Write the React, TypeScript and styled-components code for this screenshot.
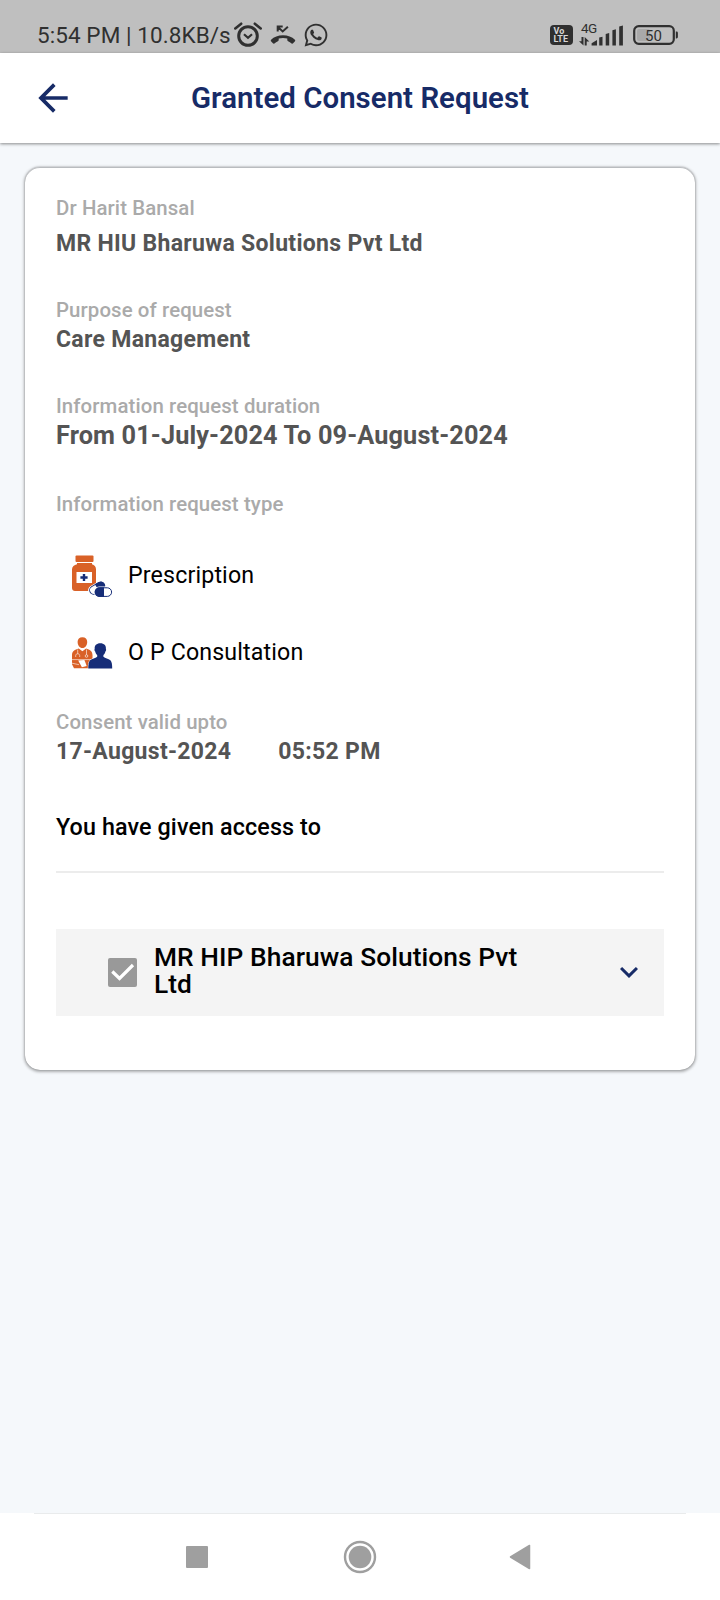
import React from "react";
import styled, { createGlobalStyle } from "styled-components";
import { FaWhatsapp } from "react-icons/fa";
import { MdArrowBack, MdKeyboardArrowDown } from "react-icons/md";

const NAVY = "#172b67";
const INK = "#303030";
const ORANGE = "#d96127";
const PILL = "#162d78";
const PAGE = "#f5f8fb";

const GlobalStyle = createGlobalStyle`
  * { box-sizing: border-box; }
  body { margin: 0; background: ${PAGE}; font-family: Roboto, "Liberation Sans", sans-serif; }
  svg { display: block; flex: none; }
`;

const Screen = styled.div`
  width: 720px;
  height: 1600px;
  display: flex;
  flex-direction: column;
  background: ${PAGE};
  overflow: hidden;
`;

const StatusBar = styled.div`
  height: 53px;
  flex: none;
  display: flex;
  justify-content: space-between;
  padding: 22px 41px 0 37px;
  background: #bfbfbf;
  color: ${INK};
`;

const StatusGroup = styled.div`
  display: flex;
  align-items: center;
  height: 26px;
`;

const StatusText = styled.span`
  font-size: 22.5px;
  line-height: 26px;
  letter-spacing: 0.08px;
  white-space: nowrap;
  width: 198px;
`;

const StatusIcon = styled.div<{ $before: number }>`
  margin-left: ${(p) => p.$before}px;
`;

const VolteBadge = styled.div`
  width: 23px;
  height: 20px;
  margin-right: 6px;
  padding: 2px 0 0 3.5px;
  border-radius: 4px;
  background: #2f2f2f;
  color: #d6d6d6;
  font-size: 9px;
  font-weight: 700;
  line-height: 8px;
`;

const Network = styled.div`
  position: relative;
  width: 46px;
  height: 24px;
`;

const NetworkName = styled.span`
  position: absolute;
  left: 2px;
  top: -3px;
  font-size: 13.5px;
  line-height: 16px;
  letter-spacing: -0.5px;
`;

const Header = styled.header`
  height: 90px;
  flex: none;
  display: grid;
  grid-template-columns: 107px 1fr 107px;
  align-items: center;
  background: #fff;
  color: ${NAVY};
  box-shadow: 0 1px 3px rgba(0, 0, 0, 0.45);
`;

const BackButton = styled.button`
  width: 44px;
  height: 44px;
  margin-left: 31px;
  padding: 0;
  border: 0;
  background: none;
  color: inherit;
`;

const Title = styled.h1`
  margin: 0;
  font-size: 29.4px;
  line-height: 34px;
  font-weight: 650;
  letter-spacing: 0.05px;
  text-align: center;
`;

const Body = styled.main`
  flex: 1;
  padding: 24px 25px 0;
`;

const Card = styled.section`
  height: 903px;
  padding: 29px 31px 0;
  display: flex;
  flex-direction: column;
  background: #fff;
  border-radius: 15px;
  box-shadow: inset 0 1px 0 #b9bcbf, 0 0 1px rgba(0, 0, 0, 0.4), 0 1px 3px 1px rgba(0, 0, 0, 0.3);
`;

const Field = styled.div<{ $after: number; $gap?: number }>`
  display: flex;
  flex-direction: column;
  gap: ${(p) => p.$gap ?? 4}px;
  margin-bottom: ${(p) => p.$after}px;
`;

const Label = styled.div`
  font-size: 20.4px;
  line-height: 24px;
  font-weight: 500;
  letter-spacing: 0.1px;
  color: #aaa;
`;

const Value = styled.div<{ $large?: boolean }>`
  display: flex;
  gap: 47px;
  font-size: ${(p) => (p.$large ? 25.3 : 23)}px;
  line-height: ${(p) => (p.$large ? 30 : 28)}px;
  letter-spacing: ${(p) => (p.$large ? 0.12 : 0.3)}px;
  font-weight: 700;
  color: #545454;
`;

const TypeList = styled.div`
  display: flex;
  flex-direction: column;
  gap: 35px;
  margin-bottom: 36px;
`;

const TypeRow = styled.div`
  display: flex;
  align-items: center;
  gap: 15px;
  height: 42px;
  padding-left: 16px;
`;

const TypeName = styled.span`
  padding-bottom: 2px;
  font-size: 23.2px;
  line-height: 28px;
  letter-spacing: 0.15px;
  color: #000;
`;

const AccessHeading = styled.h2`
  margin: 0;
  padding-bottom: 30px;
  border-bottom: 2px solid #ececec;
  font-size: 23.3px;
  line-height: 28px;
  font-weight: 500;
  letter-spacing: 0.12px;
  color: #000;
`;

const Provider = styled.div`
  display: flex;
  align-items: center;
  height: 87px;
  margin-top: 56px;
  padding: 0 17px 0 52px;
  background: #f4f4f4;
`;

const Checkbox = styled.span`
  width: 29px;
  height: 29px;
  border-radius: 2px;
  background: #999;
`;

const ProviderName = styled.span`
  width: 400px;
  margin: 0 auto 3px 17px;
  font-size: 26.3px;
  line-height: 27px;
  font-weight: 500;
  letter-spacing: 0.08px;
  color: #000;
`;

const Chevron = styled(MdKeyboardArrowDown)`
  margin-bottom: 2px;
  color: ${NAVY};
`;

const NavBar = styled.nav`
  height: 87px;
  flex: none;
  display: flex;
  flex-direction: column;
  align-items: center;
  background: #fff;
`;

const NavEdge = styled.div`
  width: 652px;
  height: 1px;
  background: #e9ebec;
`;

const NavKeys = styled.div`
  width: 348px;
  height: 34px;
  margin-top: 26px;
  display: grid;
  grid-template-columns: 157px 1fr 25px;
  align-items: center;
`;

const RecentKey = styled.span`
  width: 22px;
  height: 22px;
  border-radius: 1px;
  background: #9f9f9f;
`;

const AlarmIcon = () => (
  <svg width="28" height="26" viewBox="0 0 28 26" fill="none" stroke={INK}>
    <circle cx="14" cy="14" r="9.3" strokeWidth="3" />
    <path d="M10 12.2l4 3.6 4-3.6" strokeWidth="2.2" />
    <path d="M1.3 6.4L7.2 1.7M26.7 6.4L20.8 1.7" strokeWidth="2.6" strokeLinecap="round" />
  </svg>
);

const MissedCallIcon = () => (
  <svg width="26" height="20" viewBox="0 0 26 20" fill="none">
    <path d="M7.7 6.500V1.600h5M8.200 2.200l4.500 4.200 5.200-4.600" stroke={INK} strokeWidth="2" />
    <path
      d="M1.1 14.7C4 11.8 8.200 10.200 13 10.200s9 1.600 11.900 4.500c.5.5.5 1 .1 1.500l-1.900 2.100c-.5.5-1 .5-1.500.1-1.200-.9-2.300-1.600-3.500-2.100-.5-.2-.8-.6-.8-1.200v-1.500c-2.800-.8-5.800-.8-8.600 0v1.500c0 .6-.3 1-.8 1.200-1.200.5-2.400 1.200-3.500 2.100-.5.4-1 .4-1.500-.1L1 16.200c-.4-.5-.4-1 .1-1.500z"
      fill={INK}
    />
  </svg>
);

const SignalIcon = () => (
  <svg width="46" height="24" viewBox="0 0 46 24" fill={INK}>
    <path d="M0 18.200h2.500V14h2v8.500L0 18.200zM5.700 14l4.600 4.500H7.700v4h-2z" />
    <path d="M18 17v5.500h-5.400v-2.300zM20.200 14.600l3.300-.9v8.800h-3.300zM26.700 11l3.500-1v12.500h-3.500zM33.400 7.200l3.500-1v16.300h-3.500zM40.200 3.500l3.700-1v20h-3.700z" />
  </svg>
);

const BatteryIcon = () => (
  <svg width="46" height="20" viewBox="0 0 46 20">
    <rect x="4" y="4" width="13" height="12" rx="2" fill="#a9a9a9" />
    <rect x="1.200" y="1.200" width="39.600" height="17.600" rx="4.500" fill="none" stroke={INK} strokeWidth="2.200" />
    <path d="M42.800 6.500h.7q1.400 0 1.400 1.400v4.200q0 1.400-1.400 1.400h-.7z" fill={INK} />
    <text x="20.500" y="15.500" textAnchor="middle" fontFamily="Roboto, sans-serif" fontSize="15" fill={INK}>50</text>
  </svg>
);

const PrescriptionIcon = () => (
  <svg width="41" height="42" viewBox="0 0 41 42">
    <rect x="3.500" y="0.500" width="18" height="6.500" rx="1" fill={ORANGE} />
    <path d="M5 8h15v1.200c2.300.7 4 2.600 4 5V33c0 1.700-1.300 3-3 3H3c-1.700 0-3-1.300-3-3V14.200c0-2.400 2.200-4.300 5-5z" fill={ORANGE} />
    <rect x="4.500" y="17" width="15.500" height="11" fill="#fff" />
    <path d="M10.800 19h2.400v2.300h2.400v2.400h-2.400V26h-2.400v-2.300H8.400v-2.400h2.400z" fill={PILL} />
    <g transform="rotate(-30 25 33)">
      <rect x="15.500" y="28" width="19" height="10" rx="5" fill="#fff" />
      <rect x="17" y="29.200" width="16" height="8" rx="4" fill="#fff" stroke={PILL} strokeWidth="0.9" />
      <path d="M25 28.800h4.500a4.300 4.300 0 010 8.600H25z" fill={PILL} />
    </g>
    <rect x="21.800" y="31.500" width="19" height="10.500" rx="5.200" fill="#fff" />
    <rect x="23.300" y="32.800" width="16.300" height="8.600" rx="4.300" fill="#fff" stroke={PILL} />
    <path d="M32 32.300h-4.600a4.800 4.800 0 000 9.600H32z" fill={PILL} />
  </svg>
);

const ConsultationIcon = () => (
  <svg width="41" height="42" viewBox="0 0 41 42">
    <path d="M10.400 5.200c3 0 4.800 1.900 4.800 4.700 0 3-1.900 6.100-4.800 6.100s-4.800-3.100-4.800-6.100c0-2.800 1.800-4.700 4.800-4.700z" fill={ORANGE} />
    <path d="M6.700 16.500l3.700 2.700 3.700-2.700c3.700 1.100 6.400 2.800 6.400 6.500v9.200l-2.300 4H2L0 32.200V23c0-3.700 2.900-5.400 6.700-6.500z" fill={ORANGE} />
    <g fill="none" stroke="#fff" strokeWidth="0.6">
      <path d="M5.700 17.500v4.300M3.700 25v-1.500c0-2.300 4-2.300 4 0V25M14.500 17.500v5.200M0 27.600h20" />
      <circle cx="14.500" cy="24" r="1.300" />
      <path d="M0 31.200l7 1.500" />
    </g>
    <path d="M6.200 28.500l6.200-.5 2.300 6-4.800 1.300z" fill="#fff" />
    <path
      d="M28.300 11.300c3.800 0 5.900 2.300 5.600 5.500.5.900.2 2.300-.5 2.700-.4 1.700-1.200 2.800-2 3.600v1.600c1.800 1.800 4.900 1.600 7 3.600 1.500 1.500 1.800 4.700 1.800 8.200H16.300c0-3.500.3-6.700 1.800-8.200 2.100-2 5.300-1.800 7.100-3.600v-1.600c-.8-.8-1.600-1.900-2-3.600-.7-.4-1-1.800-.5-2.700-.3-3.200 1.800-5.500 5.600-5.500z"
      fill={PILL}
      stroke="#fff"
      strokeWidth="1"
      paintOrder="stroke"
    />
  </svg>
);

const CheckMark = () => (
  <svg width="29" height="29" viewBox="0 0 29 29" fill="none" stroke="#fff" strokeWidth="3.200">
    <path d="M4.300 13.500l7.200 7L25 7" />
  </svg>
);

const HomeKey = () => (
  <svg width="34" height="34" viewBox="0 0 34 34">
    <circle cx="17" cy="17" r="15" fill="none" stroke="#9f9f9f" strokeWidth="2.400" />
    <circle cx="17" cy="17" r="11.300" fill="#9f9f9f" />
  </svg>
);

const BackKey = () => (
  <svg width="22" height="26" viewBox="0 0 22 26">
    <path d="M20.500 1.500v23L1.500 13z" fill="#9f9f9f" stroke="#9f9f9f" strokeWidth="1.500" strokeLinejoin="round" />
  </svg>
);

const requestTypes = [
  { name: "Prescription", Icon: PrescriptionIcon },
  { name: "O P Consultation", Icon: ConsultationIcon },
];

export default function App() {
  return (
    <Screen>
      <GlobalStyle />
      <StatusBar>
        <StatusGroup>
          <StatusText>5:54 PM | 10.8KB/s</StatusText>
          <StatusIcon $before={-1}><AlarmIcon /></StatusIcon>
          <StatusIcon $before={8}><MissedCallIcon /></StatusIcon>
          <StatusIcon $before={7}><FaWhatsapp size={26} /></StatusIcon>
        </StatusGroup>
        <StatusGroup>
          <VolteBadge>Vo<br />LTE</VolteBadge>
          <Network>
            <SignalIcon />
            <NetworkName>4G</NetworkName>
          </Network>
          <StatusIcon $before={8}><BatteryIcon /></StatusIcon>
        </StatusGroup>
      </StatusBar>
      <Header>
        <BackButton aria-label="Back"><MdArrowBack size={44} /></BackButton>
        <Title>Granted Consent Request</Title>
      </Header>
      <Body>
        <Card>
          <Field $after={40} $gap={10}>
            <Label>Dr Harit Bansal</Label>
            <Value>MR HIU Bharuwa Solutions Pvt Ltd</Value>
          </Field>
          <Field $after={40}>
            <Label>Purpose of request</Label>
            <Value>Care Management</Value>
          </Field>
          <Field $after={41} $gap={3}>
            <Label>Information request duration</Label>
            <Value $large>From 01-July-2024 To 09-August-2024</Value>
          </Field>
          <Field $after={39}>
            <Label>Information request type</Label>
          </Field>
          <TypeList>
            {requestTypes.map(({ name, Icon }) => (
              <TypeRow key={name}>
                <Icon />
                <TypeName>{name}</TypeName>
              </TypeRow>
            ))}
          </TypeList>
          <Field $after={47}>
            <Label>Consent valid upto</Label>
            <Value>
              <span>17-August-2024</span>
              <span>05:52 PM</span>
            </Value>
          </Field>
          <AccessHeading>You have given access to</AccessHeading>
          <Provider>
            <Checkbox role="checkbox" aria-checked="true"><CheckMark /></Checkbox>
            <ProviderName>MR HIP Bharuwa Solutions Pvt Ltd</ProviderName>
            <Chevron size={36} />
          </Provider>
        </Card>
      </Body>
      <NavBar>
        <NavEdge />
        <NavKeys>
          <RecentKey />
          <HomeKey />
          <BackKey />
        </NavKeys>
      </NavBar>
    </Screen>
  );
}
